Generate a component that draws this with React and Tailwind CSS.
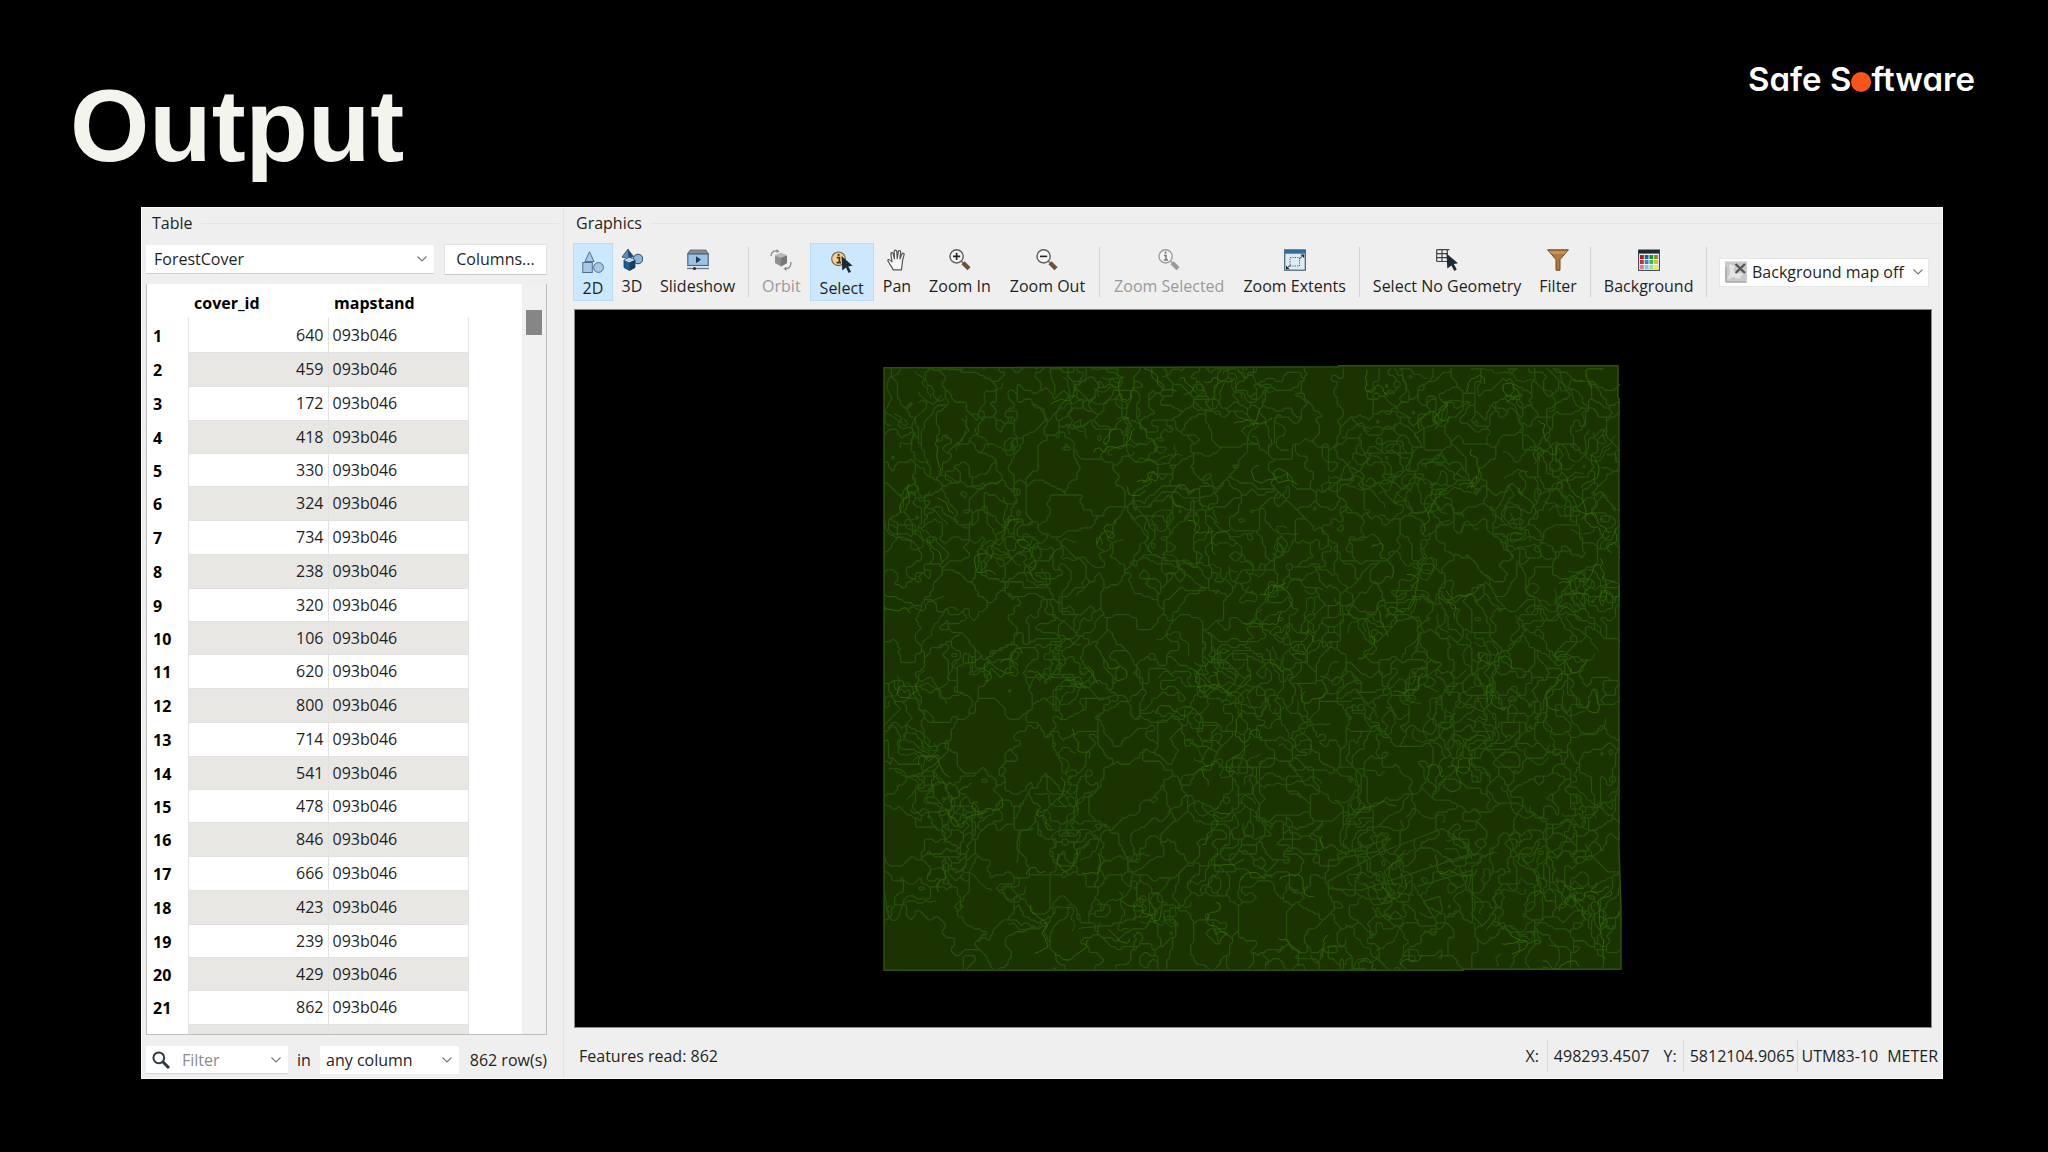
import { useMemo } from 'react'

const coverIds = [
  640, 459, 172, 418, 330, 324, 734, 238, 320, 106, 620,
  800, 714, 541, 478, 846, 666, 423, 239, 429, 862,
]

/* ---------- forest cover polygons ---------- */

const MAP_W = 738
const MAP_H = 604
const STEP = 3

// open areas with few polygon borders: x, y, radius
const clearings = [
  [440, 30, 42],
  [210, 108, 36],
  [105, 375, 62],
  [65, 225, 34],
  [245, 232, 42],
  [255, 270, 36],
  [600, 455, 30],
  [640, 390, 24],
  [40, 580, 44],
  [230, 425, 40],
  [480, 220, 24],
  [705, 385, 30],
  [380, 560, 36],
  [120, 480, 34],
  [400, 200, 30],
]

function makeRandom(seed) {
  let s = seed
  return () => {
    s = (s + 0x6d2b79f5) | 0
    let t = Math.imul(s ^ (s >>> 15), 1 | s)
    t = (t + Math.imul(t ^ (t >>> 7), 61 | t)) ^ t
    return ((t ^ (t >>> 14)) >>> 0) / 4294967296
  }
}

function makeNoise(seed) {
  const rand = makeRandom(seed)
  const grid = Array.from({ length: 4096 }, () => rand() * 2 - 1)
  const at = (x, y) => grid[((y & 63) << 6) | (x & 63)]
  return (x, y) => {
    const xi = Math.floor(x)
    const yi = Math.floor(y)
    const u = (x - xi) * (x - xi) * (3 - 2 * (x - xi))
    const v = (y - yi) * (y - yi) * (3 - 2 * (y - yi))
    const top = at(xi, yi) * (1 - u) + at(xi + 1, yi) * u
    const bottom = at(xi, yi + 1) * (1 - u) + at(xi + 1, yi + 1) * u
    return top * (1 - v) + bottom * v
  }
}

const inClearing = (x, y) =>
  clearings.some(([cx, cy, r]) => (x - cx) ** 2 + (y - cy) ** 2 < r * r)

// Borders between the warped cells of scattered seed points
function buildBorders() {
  const rand = makeRandom(862)
  const density = makeNoise(7)
  const warpX = makeNoise(11)
  const warpY = makeNoise(23)

  const sites = []
  while (sites.length < 620) {
    const x = rand() * MAP_W
    const y = rand() * MAP_H
    const d = 0.4 + density(x / 38, y / 38) * 0.5
    if (inClearing(x, y)) continue
    if (rand() < d + 0.1) sites.push([x, y])
  }
  clearings.forEach(([x, y]) => sites.push([x, y]))

  const cols = Math.floor(MAP_W / STEP) + 1
  const rows = Math.floor(MAP_H / STEP) + 1
  const owner = new Int16Array(cols * rows)
  for (let j = 0; j < rows; j++) {
    for (let i = 0; i < cols; i++) {
      const px = i * STEP
      const py = j * STEP
      const x = px + warpX(px / 26, py / 26) * 17 + warpX(px / 9, py / 9) * 9
      const y = py + warpY(px / 26, py / 26) * 17 + warpY(px / 9, py / 9) * 9
      let best = 1e9
      let id = 0
      for (let k = 0; k < sites.length; k++) {
        const dx = sites[k][0] - x
        const dy = sites[k][1] - y
        const dist = dx * dx + dy * dy
        if (dist < best) {
          best = dist
          id = k
        }
      }
      owner[j * cols + i] = id
    }
  }

  let d = ''
  for (let j = 0; j < rows - 1; j++) {
    for (let i = 0; i < cols - 1; i++) {
      const a = owner[j * cols + i]
      const b = owner[j * cols + i + 1]
      const c = owner[(j + 1) * cols + i + 1]
      const e = owner[(j + 1) * cols + i]
      const x = i * STEP
      const y = j * STEP
      const h = STEP / 2
      const pts = []
      if (a !== b) pts.push([x + h, y])
      if (b !== c) pts.push([x + STEP, y + h])
      if (c !== e) pts.push([x + h, y + STEP])
      if (e !== a) pts.push([x, y + h])
      if (pts.length === 2) {
        d += `M${pts[0]}L${pts[1]}`
      } else {
        pts.forEach((p) => {
          d += `M${p}L${x + h},${y + h}`
        })
      }
    }
  }
  return d
}

// Short winding lines: streams, roads and slivers
function buildSquiggles(seed, count, maxSteps) {
  const rand = makeRandom(seed)
  const density = makeNoise(7)
  let d = ''
  let made = 0
  while (made < count) {
    let x = rand() * MAP_W
    let y = rand() * MAP_H
    if (inClearing(x, y) || rand() > 0.5 + density(x / 38, y / 38)) continue
    let angle = rand() * Math.PI * 2
    const steps = 6 + Math.floor(rand() * maxSteps)
    d += `M${x.toFixed(1)},${y.toFixed(1)}`
    for (let i = 0; i < steps; i++) {
      angle += (rand() - 0.5) * 2.4
      const len = 2 + rand() * 4
      x = Math.min(MAP_W - 1, Math.max(1, x + Math.cos(angle) * len))
      y = Math.min(MAP_H - 1, Math.max(1, y + Math.sin(angle) * len))
      d += `L${x.toFixed(1)},${y.toFixed(1)}`
    }
    made++
  }
  return d
}

function ForestMap() {
  const borders = useMemo(buildBorders, [])
  const squiggles = useMemo(() => buildSquiggles(31, 300, 18), [])
  const slivers = useMemo(() => buildSquiggles(77, 130, 10), [])

  return (
    <svg viewBox="0 0 1358 719" className="block w-full h-full" role="img" aria-label="ForestCover">
      <path
        d="M309 58 L765 57 V56 L1045 56 V87 L1046 89 L1046 540 L1048 600 V661 L890 661 V662 L309 662 Z"
        fill="#1a3300"
        stroke="#2b5408"
        strokeWidth="1.5"
      />
      <g transform="translate(309 58)" fill="none" strokeLinejoin="round">
        <path d={borders} stroke="#28500c" strokeWidth="1.3" />
        <path d={squiggles} stroke="#28520b" strokeWidth="1.1" />
        <path d={slivers} stroke="#32640c" strokeWidth="1" />
        <g stroke="#28500c" strokeWidth="1.3">
          <path d="M445 515 L500 485 L560 462 L582 476 L590 487 L478 524 L446 522 Z" />
          <path d="M455 492 L495 485 L508 472 L455 488 Z M535 520 L590 504 L590 556" />
          <path d="M541 535 L557 530 L560 544 L552 552 Z" />
        </g>
      </g>
    </svg>
  )
}

/* ---------- icons ---------- */

function Icon({ children }) {
  return (
    <svg viewBox="0 0 22 22" className="w-[22px] h-[22px] shrink-0" fill="none" aria-hidden="true">
      {children}
    </svg>
  )
}

function Icon2D() {
  return (
    <Icon>
      <g fill="#a9c9e6" stroke="#4f6f8f" strokeWidth="1">
        <path d="M7.5 0.8 L12 10.5 H3 Z" />
        <rect x="0.8" y="11.5" width="9.5" height="10" />
        <circle cx="16.5" cy="16.5" r="4.9" />
      </g>
    </Icon>
  )
}

function Icon3D() {
  return (
    <Icon>
      <path d="M7 0 L13 7.5 L8 10 L1 8 Z" fill="#1f4a73" />
      <path d="M7 0 L8 10 L1 8 Z" fill="#5f8db8" stroke="#1c3a5a" strokeWidth="0.6" />
      <circle cx="17" cy="10" r="4.8" fill="#8fb6da" stroke="#26486b" strokeWidth="1" />
      <path d="M3 11 L8.5 8.5 L14 11 V18.5 L8.5 21.5 L3 18.5 Z" fill="#1f5d8f" stroke="#17334f" strokeWidth="0.8" />
      <path d="M3 11 L8.5 8.5 L14 11 L8.5 13.5 Z" fill="#b9d8f0" />
      <path d="M8.5 13.5 L14 11 V18.5 L8.5 21.5 Z" fill="#153f66" />
    </Icon>
  )
}

function SlideshowIcon() {
  return (
    <Icon>
      <path d="M3 1 H19 L21.5 5 H0.5 Z" fill="#858b90" stroke="#555b61" strokeWidth="0.7" />
      <rect x="0.8" y="5" width="20.4" height="11.5" fill="#9cc3e6" stroke="#46688a" strokeWidth="1.2" />
      <path d="M9 7.2 L14 10.7 L9 14.2 Z" fill="#23364a" />
      <path d="M0 19.5 H22" stroke="#6b7c8c" strokeWidth="1.4" />
      <circle cx="7.5" cy="19.5" r="1.6" fill="#23303c" />
    </Icon>
  )
}

function OrbitIcon() {
  return (
    <Icon>
      <path d="M5 6.5 L11 4 L17 6.5 V14 L11 17.5 L5 14 Z" fill="#8f8f8f" />
      <path d="M5 6.5 L11 4 L17 6.5 L11 9 Z" fill="#b9b9b9" />
      <path d="M11 9 L17 6.5 V14 L11 17.5 Z" fill="#777777" />
      <path d="M1 7 C1.5 2.5 4 1.5 8 2" stroke="#8d8d8d" strokeWidth="1.3" />
      <path d="M6.5 0 L9.5 2.2 L6.5 4.2 Z" fill="#8d8d8d" />
      <path d="M21 13 C21 18 19 19.8 15.5 19.8" stroke="#8d8d8d" strokeWidth="1.3" />
      <path d="M16.5 17.4 L13.3 19.7 L16.5 22 Z" fill="#8d8d8d" />
    </Icon>
  )
}

function SelectIcon() {
  return (
    <Icon>
      <circle cx="7.5" cy="7.8" r="6.8" fill="#f6cf8b" stroke="#6f6350" strokeWidth="1.1" />
      <path d="M5.8 6.6 H8.4 V11.4 M5.6 11.6 H10" stroke="#3b3428" strokeWidth="1.6" />
      <circle cx="7.6" cy="3.9" r="1.1" fill="#3b3428" />
      <path d="M10.5 5 L21.6 14.8 L17.3 15.4 L20 20.8 L17.6 22 L15 16.6 L11.3 19.6 Z" fill="#1d2b36" />
    </Icon>
  )
}

function PanIcon() {
  return (
    <Icon>
      <path
        d="M7 20.8 C6.8 18.6 4.5 16.5 3 13.8 C2.2 12.3 1.3 11.2 2.4 10.6 C3.6 10 4.8 11.4 6 12.9 L4.9 5.2 C4.7 3.4 6.8 3 7.2 4.7 L8.4 9.8 L8.2 2.4 C8.2 0.6 10.6 0.6 10.8 2.4 L11.2 9.6 L12.3 2.7 C12.6 1 14.8 1.4 14.6 3.1 L13.9 10 L16 5 C16.7 3.4 18.6 4.2 18 5.9 L16.4 12 C16.4 15 15.8 17 15.5 20.8 Z"
        fill="#f8f8f8"
        stroke="#555555"
        strokeWidth="1.2"
        strokeLinejoin="round"
      />
    </Icon>
  )
}

function ZoomIcon({ kind }) {
  const off = kind === 'info'
  return (
    <Icon>
      <path d="M12.4 12.2 L14.5 14.3" stroke={off ? '#a0a0a0' : '#777777'} strokeWidth="1.6" />
      <path d="M14 13.8 L20 19.8" stroke={off ? '#9a9a9a' : '#6f5236'} strokeWidth="4.4" />
      <circle cx="7.6" cy="7.4" r="6.6" fill="#f5f5f5" stroke={off ? '#9b9b9b' : '#5d5d5d'} strokeWidth="1.4" />
      {kind === 'in' && <path d="M4 7.4 H11.2 M7.6 3.8 V11" stroke="#222222" strokeWidth="1.6" />}
      {kind === 'out' && <path d="M4 7.4 H11.2" stroke="#222222" strokeWidth="1.6" />}
      {off && (
        <>
          <path d="M6 6.4 H8 V11 M5.8 11 H10" stroke="#777777" strokeWidth="1.5" />
          <circle cx="7.5" cy="3.7" r="1.1" fill="#777777" />
        </>
      )}
    </Icon>
  )
}

function ExtentsIcon() {
  return (
    <Icon>
      <rect x="0.7" y="0.9" width="20.6" height="20.3" fill="#dcebf5" stroke="#46606f" strokeWidth="1.2" />
      <rect x="0.7" y="0.9" width="20.6" height="3.8" fill="#2f6f9f" />
      <rect x="6" y="8.5" width="9.5" height="8.5" stroke="#4a5c68" strokeWidth="1" strokeDasharray="1.2 1.2" />
      <path d="M16.4 5.6 H20.2 V9.2 Z M2 16.6 V20.2 H5.8 Z" fill="#1f2a33" />
      <path d="M15.6 9.8 L18.5 7 M3.5 18.6 L6.6 16" stroke="#1f2a33" strokeWidth="1" />
    </Icon>
  )
}

function NoGeometryIcon() {
  return (
    <Icon>
      <path d="M0.7 0.7 H13.5 M0.7 4.7 H12 M0.7 8.7 H11 M0.7 12.5 H11 M0.7 0.7 V12.5 M6 0.7 V12.5 M11.2 0.7 V6" stroke="#39444d" strokeWidth="1.2" />
      <path d="M10.5 4.5 L22 14.3 L17.8 15 L20.8 20.6 L18.4 22 L15.4 16.4 L11.3 19.6 Z" fill="#1d2b36" />
    </Icon>
  )
}

function FilterIcon() {
  return (
    <Icon>
      <path d="M0.6 0.8 H21.4 L13 10.6 V21.2 H9 V10.6 Z" fill="#b07a3c" stroke="#6b4a26" strokeWidth="1" />
      <path d="M2 2.2 H20 L17 5 H5 Z" fill="#c4955c" />
    </Icon>
  )
}

function PaletteIcon() {
  const cells = [
    ['#a31f1f', '#1f5c9c', '#1f8c2a', '#8a8a1c'],
    ['#d92b2b', '#2b8ad6', '#2fc23c', '#c9c22a'],
    ['#ee7777', '#7fc0f0', '#8ee58e', '#ecea5a'],
  ]
  return (
    <Icon>
      <rect x="0.6" y="1" width="20.8" height="20.4" fill="#f6f6f6" stroke="#3c4650" strokeWidth="1.1" />
      <rect x="0.6" y="1" width="20.8" height="3.6" fill="#1e2830" />
      {cells.map((row, j) =>
        row.map((c, i) => (
          <rect key={`${i}-${j}`} x={2 + i * 4.7} y={6 + j * 5} width="3.8" height="4" fill={c} />
        )),
      )}
    </Icon>
  )
}

function MapOffIcon() {
  return (
    <Icon>
      <rect x="0" y="0.5" width="22" height="21" fill="#c9c9c9" />
      <path d="M4 3 L10 5 L8 9 L13 12 L18 13 L14 18 L8 16 L2 19 L5 12 Z" fill="#e4e4e4" />
      <path d="M1 21 V6 M1 21 H21" stroke="#a9a9a9" strokeWidth="1.4" />
      <path d="M10.5 3 L20 12 M20 3 L10.5 12" stroke="#555555" strokeWidth="2.4" />
    </Icon>
  )
}

function Chevron({ className }) {
  return (
    <svg viewBox="0 0 10 6" className={`w-[10px] h-[6px] pointer-events-none ${className}`} fill="none" aria-hidden="true">
      <path d="M0.5 0.5 L5 5 L9.5 0.5" stroke="#777777" strokeWidth="1.1" />
    </svg>
  )
}

/* ---------- controls ---------- */

function ToolButton({ icon, label, active, disabled, pad = 'px-2' }) {
  const state = active
    ? 'bg-[#cce8ff] border-[#b5dcf9] pt-[7px]'
    : 'border-transparent pt-[5px]'
  return (
    <button
      type="button"
      disabled={disabled}
      aria-pressed={active}
      className={`h-[58px] ${pad} border flex flex-col items-center gap-[3px] whitespace-nowrap leading-6 ${state} ${
        disabled ? 'text-[#9a9a9a]' : ''
      }`}
    >
      {icon}
      {label}
    </button>
  )
}

function Divider() {
  return <div className="w-px h-[50px] bg-[#d2d2d2] mx-1" />
}

function TablePanel() {
  return (
    <section className="w-[422px] shrink-0 flex flex-col pl-1 pr-4 pb-1 border-r border-[#e3e3e3]">
      <div className="flex items-center h-[30px] gap-2">
        <h2 className="pl-[6px]">Table</h2>
        <div className="flex-1 h-px bg-[#e4e4e4] -mr-3" />
      </div>

      <div className="flex items-center gap-[10px] h-[30px] mt-[6px]">
        <div className="relative flex-1">
          <select
            aria-label="Feature type"
            className="appearance-none w-full h-[29px] bg-white border-b border-[#cfcfcf] pl-2 leading-6"
          >
            <option>ForestCover</option>
          </select>
          <Chevron className="absolute right-[7px] top-[11px]" />
        </div>
        <button type="button" className="w-[103px] h-[31px] bg-white border border-[#e2e2e2] border-b-[#c8c8c8]">
          Columns...
        </button>
      </div>

      <div className="flex flex-1 min-h-0 mt-[10px] bg-white border-x border-b border-[#bdbdbd] overflow-hidden">
        <table className="w-[321px] h-fit table-fixed border-collapse">
          <colgroup>
            <col className="w-[41px]" />
            <col className="w-[140px]" />
            <col className="w-[140px]" />
          </colgroup>
          <thead>
            <tr className="h-[34px] text-left text-black">
              <th aria-label="Row" />
              <th className="pl-[6px] pt-1">cover_id</th>
              <th className="pl-[6px] pt-1">mapstand</th>
            </tr>
          </thead>
          <tbody>
            {coverIds.map((id, i) => (
              <tr key={id} className={i % 5 < 3 ? 'h-[34px]' : 'h-[33px]'}>
                <th className="pl-[6px] pt-[2px] text-left text-black">{i + 1}</th>
                <td className={`border-x border-[#e2e2e2] pr-1 text-right ${i % 2 ? 'border-y bg-[#e8e7e4]' : ''}`}>{id}</td>
                <td className={`border-x border-[#e2e2e2] pl-1 ${i % 2 ? 'border-y bg-[#e8e7e4]' : ''}`}>093b046</td>
              </tr>
            ))}
            <tr className="h-[34px]">
              <th aria-label="Next row" />
              <td className="border border-[#e2e2e2] bg-[#e8e7e4]" />
              <td className="border border-[#e2e2e2] bg-[#e8e7e4]" />
            </tr>
          </tbody>
        </table>
        <div className="ml-auto w-6 bg-[#f0f0f0] pt-[26px] px-1">
          <div className="h-[25px] bg-[#868686]" />
        </div>
      </div>

      <div className="flex items-center h-[28px] mt-[11px] whitespace-nowrap">
        <label className="relative flex items-center w-[142px] h-[28px] bg-white border-b border-[#d5d5d5]">
          <svg viewBox="0 0 18 18" className="w-[18px] h-[18px] ml-[6px] shrink-0" fill="none" aria-hidden="true">
            <circle cx="6.8" cy="6.8" r="5.4" stroke="#2c3a44" strokeWidth="2" />
            <path d="M10.8 10.8 L17 17" stroke="#2c3a44" strokeWidth="3" />
          </svg>
          <input
            type="text"
            placeholder="Filter"
            aria-label="Filter rows"
            className="w-[90px] ml-[12px] bg-transparent placeholder-[#8c8c8c]"
          />
          <Chevron className="absolute right-[7px] top-[11px]" />
        </label>
        <label htmlFor="column" className="w-8 text-center">in</label>
        <div className="relative w-[139px]">
          <select id="column" className="appearance-none w-full h-[28px] bg-white pl-[6px] leading-6">
            <option>any column</option>
          </select>
          <Chevron className="absolute right-[7px] top-[11px]" />
        </div>
        <span className="ml-auto">862 row(s)</span>
      </div>
    </section>
  )
}

function GraphicsPanel() {
  return (
    <section className="flex-1 min-w-0 flex flex-col pl-[10px]">
      <div className="flex items-center h-[30px] gap-2">
        <h2 className="pl-[2px]">Graphics</h2>
        <div className="flex-1 h-px bg-[#e4e4e4]" />
      </div>

      <div className="flex items-center h-[64px] mt-[2px] -ml-px mr-[13px]">
        <ToolButton icon={<Icon2D />} label="2D" active />
        <ToolButton icon={<Icon3D />} label="3D" pad="px-[7px]" />
        <ToolButton icon={<SlideshowIcon />} label="Slideshow" />
        <Divider />
        <ToolButton icon={<OrbitIcon />} label="Orbit" disabled />
        <ToolButton icon={<SelectIcon />} label="Select" active pad="px-[9px]" />
        <ToolButton icon={<PanIcon />} label="Pan" />
        <ToolButton icon={<ZoomIcon kind="in" />} label="Zoom In" />
        <ToolButton icon={<ZoomIcon kind="out" />} label="Zoom Out" pad="px-[9px]" />
        <Divider />
        <ToolButton icon={<ZoomIcon kind="info" />} label="Zoom Selected" disabled pad="px-[9px]" />
        <ToolButton icon={<ExtentsIcon />} label="Zoom Extents" />
        <Divider />
        <ToolButton icon={<NoGeometryIcon />} label="Select No Geometry" />
        <ToolButton icon={<FilterIcon />} label="Filter" />
        <Divider />
        <ToolButton icon={<PaletteIcon />} label="Background" />
        <Divider />
        <div className="relative ml-auto w-[210px] h-[29px] bg-white border border-[#e6e6e6] flex items-center pl-[5px]">
          <MapOffIcon />
          <select aria-label="Background map" className="appearance-none flex-1 h-[27px] pl-[5px] leading-6">
            <option>Background map off</option>
          </select>
          <Chevron className="absolute right-[5px] top-[10px]" />
        </div>
      </div>

      <div className="flex-1 min-h-0 mt-[5px] mr-[10px] bg-black border border-[#8a8a8a]">
        <ForestMap />
      </div>

      <footer className="flex items-center h-[50px] pt-[6px] pl-[5px] pr-1 whitespace-nowrap">
        <span>Features read: 862</span>
        <span className="ml-auto pr-2">X:</span>
        <span className="border-l border-[#d9d9d9] pl-[6px] pr-[14px] py-1">498293.4507</span>
        <span className="pr-[6px]">Y:</span>
        <span className="border-x border-[#d9d9d9] pl-[6px] pr-[2px] py-1">5812104.9065</span>
        <span className="pl-1 pr-[9px]">UTM83-10</span>
        <span>METER</span>
      </footer>
    </section>
  )
}

export default function App() {
  return (
    <div className="h-screen bg-black flex flex-col overflow-hidden pb-[73px] pl-[141px] pr-[105px]">
      <header className="flex items-start justify-between h-[207px] shrink-0 -ml-[71px] -mr-[32px] font-['Liberation_Sans',Arial,sans-serif]">
        <h1 className="pt-[71px] text-[102px] leading-[110px] font-bold text-[#f4f4ee]">Output</h1>
        <div className="pt-[58px] text-[33px] leading-[42px] font-semibold text-white font-['Inter',sans-serif] [font-feature-settings:'cv11'] whitespace-nowrap">
          Safe S
          <span className="relative text-[#fa5519]">
            o<span className="absolute inset-x-0 bottom-[7px] h-5 rounded-full bg-[#fa5519]" />
          </span>
          ftware
        </div>
      </header>

      <main className="flex-1 min-h-0 flex bg-[#efefef] border border-[#fafafa] text-base leading-6 text-[#1f1f1f] font-['Open_Sans','Noto_Sans',sans-serif]">
        <TablePanel />
        <GraphicsPanel />
      </main>
    </div>
  )
}
